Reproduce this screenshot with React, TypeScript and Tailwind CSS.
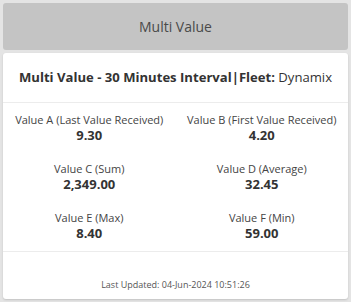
import React from "react";

const items = [
  ["Value A (Last Value Received)", "9.30"],
  ["Value B (First Value Received)", "4.20"],
  ["Value C (Sum)", "2,349.00"],
  ["Value D (Average)", "32.45"],
  ["Value E (Max)", "8.40"],
  ["Value F (Min)", "59.00"],
];

export default function App() {
  return (
    <div
      className="w-[351px] h-[302px] bg-[#e4e4e4] p-[3px] flex flex-col gap-[3px]"
      style={{ fontFamily: '"Open Sans", sans-serif' }}
    >
      <div className="h-[47px] shrink-0 bg-[#c4c4c4] rounded-[3px] flex items-center justify-center text-[14px] text-[#4a4a4a]">
        Multi Value
      </div>
      <div className="flex-1 bg-white rounded-[3px] shadow-[0_1px_2px_rgba(0,0,0,0.15)] flex flex-col">
        <div className="h-[49px] shrink-0 flex items-center justify-center text-[13.1px] text-[#333]">
          <span className="font-bold">Multi Value - 30 Minutes Interval|Fleet:</span>
          <span>&nbsp;Dynamix</span>
        </div>
        <div className="border-t border-[#ececec] pt-[9px] pb-[9px] grid grid-cols-2">
          {items.map(([label, value], i) => (
            <div key={i} className={`flex flex-col items-center ${i < 4 ? "mb-[17px]" : ""}`}>
              <div className="text-[11px] leading-[15px] text-[#444]">{label}</div>
              <div className="text-[13px] leading-[17px] font-bold text-[#333]">{value}</div>
            </div>
          ))}
        </div>
        <div className="flex-1 border-t border-[#ececec] flex items-end justify-center pb-[8px] text-[9px] leading-[12px] text-[#555]">
          Last Updated: 04-Jun-2024 10:51:26
        </div>
      </div>
    </div>
  );
}
